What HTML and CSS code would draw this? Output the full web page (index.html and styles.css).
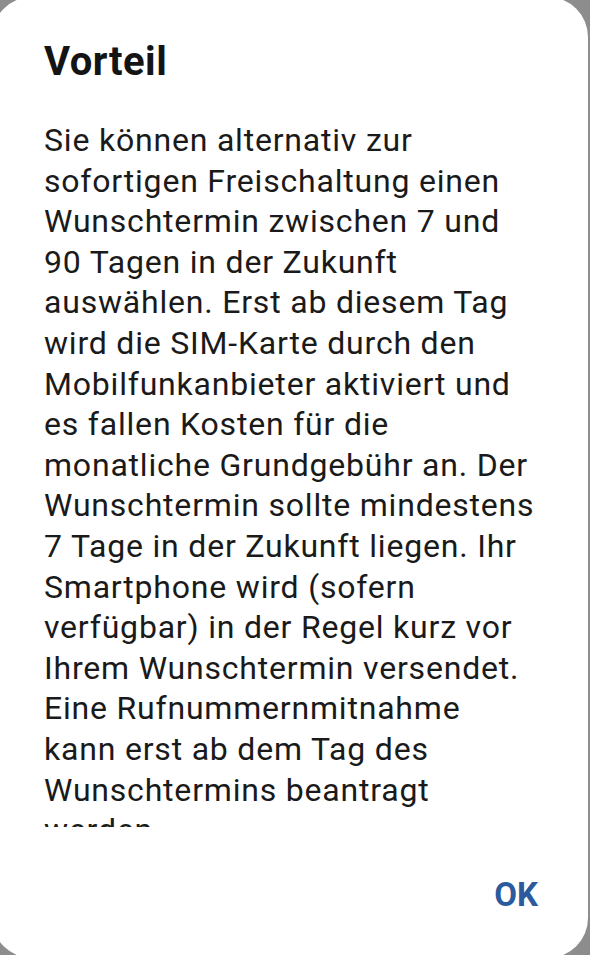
FILE: index.html
```html
<!DOCTYPE html>
<html lang="de">
<head>
<meta charset="utf-8">
<title>Vorteil</title>
<link rel="stylesheet" href="styles.css">
</head>
<body>
  <div class="dialog">
    <h1 class="title">Vorteil</h1>
    <div class="scroll">
      <p class="message">Sie können alternativ zur sofortigen Freischaltung einen Wunschtermin zwischen 7 und 90 Tagen in der Zukunft auswählen. Erst ab diesem Tag wird die SIM-Karte durch den Mobilfunkanbieter aktiviert und es fallen Kosten für die monatliche Grundgebühr an. Der Wunschtermin sollte mindestens 7 Tage in der Zukunft liegen. Ihr Smartphone wird (sofern verfügbar) in der Regel kurz vor Ihrem Wunschtermin versendet. Eine Rufnummernmitnahme kann erst ab dem Tag des Wunschtermins beantragt werden.</p>
    </div>
    <div class="actions">
      <button class="ok" type="button">OK</button>
    </div>
  </div>
</body>
</html>
```

FILE: styles.css
```css
html, body {
  margin: 0;
  padding: 0;
  height: 955px;
  overflow: hidden;
  background: #8d8d8d;
}

body {
  font-family: Roboto, "Noto Sans", sans-serif;
}

.dialog {
  box-sizing: border-box;
  width: 596px;
  height: 961px;
  margin: -3px 0 0 -8px;
  background: #ffffff;
  border-radius: 40px;
  padding: 41px 0 0 52px;
  display: flex;
  flex-direction: column;
}

.title {
  margin: 0;
  font-size: 40px;
  line-height: 48px;
  font-weight: 700;
  letter-spacing: 0.5px;
  color: #141414;
}

.scroll {
  margin-top: 34px;
  height: 707px;
  overflow: hidden;
  width: 494px;
}

.message {
  margin: 0;
  font-size: 32px;
  line-height: 40.6px;
  font-weight: 400;
  letter-spacing: 0.8px;
  color: #1a1a1a;
}

.actions {
  display: flex;
  justify-content: flex-end;
  margin-top: 48px;
  padding-right: 50px;
}

.ok {
  border: 0;
  background: transparent;
  padding: 0;
  font-family: Roboto, "Noto Sans", sans-serif;
  font-size: 33px;
  line-height: 40px;
  font-weight: 700;
  color: #2b5b9d;
}
```
